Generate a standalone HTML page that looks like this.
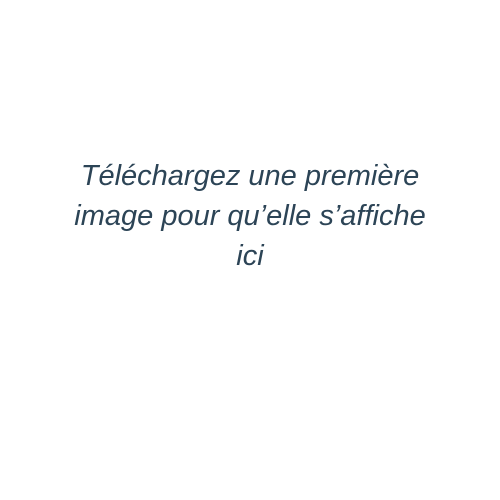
<!DOCTYPE html>
<html><head><meta charset="utf-8"><style>
html,body{margin:0;padding:0;background:#fff;width:500px;height:500px;overflow:hidden}
.t{position:absolute;left:0;top:156px;width:500px;text-align:center;font-family:"Liberation Sans",sans-serif;font-style:italic;font-size:29px;line-height:40px;color:#2c4456}
</style></head><body>
<div class="t">Téléchargez une première<br>image pour qu’elle s’affiche<br>ici</div>
</body></html>
